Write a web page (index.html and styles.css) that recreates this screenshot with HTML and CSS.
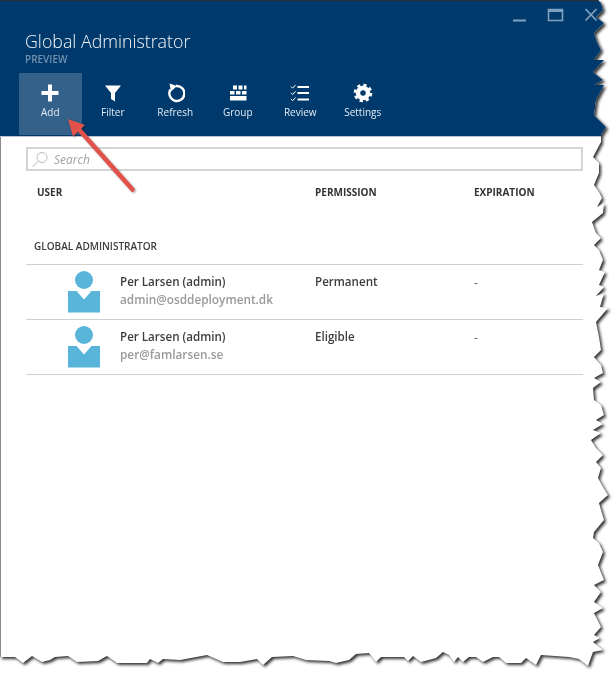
FILE: index.html
```html
<!DOCTYPE html>
<html lang="en">
<head>
<meta charset="utf-8">
<title>Global Administrator</title>
<link rel="stylesheet" href="styles.css">
</head>
<body>
<div class="torn">
<div class="sheet">
  <header class="blade">
    <div class="controls">
      <svg class="ctl" width="90" height="16" viewBox="0 0 90 16"><path d="M0 13.500h13" class="ctl-s" stroke-width="2"/><path d="M35.500 2.500h14v11h-14z" class="ctl-s" stroke-width="1.600"/><path d="M35 3.500h15" class="ctl-s" stroke-width="3"/><path d="M72.500 2l11 11.500M83.500 2l-11 11.500" class="ctl-s" stroke-width="1.800"/></svg>
    </div>
    <h1 class="title">Global Administrator</h1>
    <div class="subtitle">PREVIEW</div>
    <nav class="toolbar">
      <div class="tool active">
        <svg class="icon" width="20" height="20" viewBox="0 0 20 20"><path d="M8 1.500h4V8h6.500v4H12v6.500H8V12H1.500V8H8z" fill="#fff"/></svg>
        <span>Add</span>
      </div>
      <div class="tool">
        <svg class="icon" width="20" height="20" viewBox="0 0 20 20"><path d="M2 2.500h16l-6 7.500v8.500l-4-2.500v-6z" fill="#fff"/></svg>
        <span>Filter</span>
      </div>
      <div class="tool">
        <svg class="icon" width="20" height="20" viewBox="0 0 20 20"><path d="M5.500 6.500A7.500 7.500 0 1 0 11 3" fill="none" stroke="#fff" stroke-width="2.400"/><path d="M4.500 .5l7.500 2.500L6 8.500z" fill="#fff"/></svg>
        <span>Refresh</span>
      </div>
      <div class="tool">
        <svg class="icon" width="20" height="20" viewBox="0 0 20 20"><path d="M5 2.500h4v4H5zM10.500 2.500h4v4h-4zM16 2.500h2.500v4H16zM2 8h4.500v3.500H2zM8 8h4.500v3.500H8zM14 8h4.500v3.500H14zM2 13h16.500v4.500H2z" fill="#fff"/></svg>
        <span>Group</span>
      </div>
      <div class="tool">
        <svg class="icon" width="20" height="20" viewBox="0 0 20 20"><path d="M1 3.500l1.700 1.700L5.500 2M1 9.800l1.700 1.700 2.800-3.200M1 16l1.700 1.700 2.800-3.200" fill="none" stroke="#fff" stroke-width="1"/><path d="M7.500 4h11.500M7.500 10h11.500M7.500 16.500h11.500" stroke="#fff" stroke-width="1.800"/></svg>
        <span>Review</span>
      </div>
      <div class="tool">
        <svg class="icon" width="20" height="20" viewBox="0 0 20 20"><circle cx="10" cy="10" r="5" fill="none" stroke="#fff" stroke-width="4.500"/><circle cx="10" cy="10" r="8" fill="none" stroke="#fff" stroke-width="2.600" stroke-dasharray="3.300 3"/></svg>
        <span>Settings</span>
      </div>
    </nav>
  </header>
  <main class="content">
    <div class="search">
      <svg width="20" height="17" viewBox="0 0 20 17"><circle cx="12" cy="6.500" r="5" fill="none" stroke="#bbb"/><path d="M8.500 10L2.500 15.500" stroke="#bbb"/></svg>
      <span>Search</span>
    </div>
    <div class="row head">
      <div class="c-user">USER</div>
      <div>PERMISSION</div>
      <div>EXPIRATION</div>
    </div>
    <div class="section">GLOBAL ADMINISTRATOR</div>
    <div class="row entry">
      <div class="c-user person">
        <svg class="avatar" width="32" height="42" viewBox="0 0 32 42"><circle cx="16" cy="9" r="9" fill="#59b4d9"/><path d="M0 20h8.500l7.500 8.500 7.500-8.500H32v21.500H0z" fill="#59b4d9"/></svg>
        <div>
          <div class="name">Per Larsen (admin)</div>
          <div class="mail">admin@osddeployment.dk</div>
        </div>
      </div>
      <div class="perm">Permanent</div>
      <div class="exp">-</div>
    </div>
    <div class="row entry">
      <div class="c-user person">
        <svg class="avatar" width="32" height="42" viewBox="0 0 32 42"><circle cx="16" cy="9" r="9" fill="#59b4d9"/><path d="M0 20h8.500l7.500 8.500 7.500-8.500H32v21.500H0z" fill="#59b4d9"/></svg>
        <div>
          <div class="name">Per Larsen (admin)</div>
          <div class="mail">per@famlarsen.se</div>
        </div>
      </div>
      <div class="perm">Eligible</div>
      <div class="exp">-</div>
    </div>
  </main>
</div>
</div>
<svg class="arrow" width="90" height="90" viewBox="60 110 90 90"><path d="M132.500 189.500L78.500 129" stroke="#e2524b" stroke-width="4.500" stroke-linecap="round"/><path d="M68 119L85 125 73 136.500z" fill="#e2524b"/></svg>
</body>
</html>
```
FILE: styles.css
```css
html, body {
  margin: 0;
  padding: 0;
  background: #fff;
}
body {
  width: 616px;
  height: 677px;
  overflow: hidden;
  position: relative;
  font-family: "Open Sans", "Noto Sans", sans-serif;
}
.torn {
  width: 616px;
  height: 677px;
  filter: drop-shadow(2px 2.500px 1.400px #333);
}
.sheet {
  width: 616px;
  height: 677px;
  box-sizing: border-box;
  background: #fff;
  border-left: 1px solid #8c8c8c;
  clip-path: polygon(0 0, 598px 0, 601px 3px, 603px 10px, 596px 17px, 604px 23px, 594px 33px, 597px 42px, 601px 50px, 594px 60px, 604px 60px, 593px 72px, 603px 80px, 594px 85px, 604px 85px, 596px 100px, 594px 115px, 606px 127px, 601px 135px, 601px 142px, 593px 157px, 599px 163px, 599px 173px, 594px 185px, 599px 192px, 602px 198px, 597px 207px, 604px 203px, 603px 213px, 592px 222px, 596px 233px, 601px 238px, 594px 245px, 599px 250px, 603px 260px, 599px 270px, 605px 272px, 599px 285px, 604px 287px, 596px 296px, 604px 293px, 600px 307px, 608px 308px, 596px 322px, 599px 337px, 601px 350px, 594px 357px, 601px 365px, 603px 373px, 594px 378px, 601px 382px, 593px 388px, 594px 400px, 601px 405px, 604px 415px, 596px 420px, 603px 424px, 593px 430px, 601px 433px, 591px 440px, 596px 448px, 603px 455px, 596px 462px, 601px 468px, 598px 478px, 603px 487px, 608px 495px, 599px 503px, 601px 510px, 604px 520px, 594px 532px, 593px 538px, 599px 543px, 603px 552px, 598px 565px, 604px 580px, 594px 585px, 601px 592px, 594px 602px, 603px 608px, 594px 613px, 601px 627px, 594px 635px, 600px 638px, 593px 642px, 603px 650px, 593px 652px, 588px 666px, 579px 659px, 569px 657px, 541px 655px, 536px 665px, 526px 658px, 521px 663px, 506px 663px, 499px 657px, 493px 657px, 483px 662px, 476px 657px, 469px 657px, 463px 662px, 458px 657px, 454px 662px, 449px 655px, 443px 652px, 436px 658px, 421px 662px, 413px 656px, 408px 661px, 404px 657px, 381px 657px, 376px 662px, 369px 653px, 356px 654px, 349px 660px, 336px 663px, 329px 661px, 306px 660px, 293px 656px, 272px 657px, 263px 665px, 257px 659px, 240px 662px, 223px 662px, 207px 655px, 180px 660px, 163px 659px, 158px 663px, 150px 659px, 147px 663px, 128px 663px, 117px 663px, 107px 656px, 98px 661px, 77px 662px, 68px 656px, 55px 657px, 50px 660px, 42px 662px, 32px 656px, 23px 663px, 15px 657px, 0 657px);
}
.blade {
  height: 137px;
  box-sizing: border-box;
  background: #003a6c;
  border-top: 1px solid #2a2f36;
  border-bottom: 1px solid #b9c6d2;
  margin-left: -1px;
  padding-left: 25px;
  position: relative;
}
.controls {
  display: flex;
  justify-content: flex-end;
  height: 22px;
  padding: 6px 13px 0 0;
  box-sizing: border-box;
}
.ctl-s {
  fill: none;
  stroke: #7fa0bf;
}
.title {
  margin: 6px 0 0;
  font-size: 17.800px;
  line-height: 24px;
  font-weight: 300;
  color: #f4f7fa;
}
.subtitle {
  font-size: 10px;
  line-height: 12px;
  font-weight: 600;
  color: #6f92b2;
}
.toolbar {
  display: flex;
  margin: 8px 0 0 -6px;
}
.tool {
  width: 62.500px;
  height: 62px;
  box-sizing: border-box;
  padding-top: 10px;
  display: flex;
  flex-direction: column;
  align-items: center;
  font-size: 10px;
  line-height: 13px;
  color: #e3ebf2;
}
.tool.active {
  background: #33618a;
}
.tool span {
  margin-top: 3px;
}
.content {
  width: 557px;
  margin-left: 25px;
}
.search {
  height: 24px;
  margin-top: 10px;
  box-sizing: border-box;
  border: 2px solid #d4d4d4;
  display: flex;
  align-items: center;
  gap: 4px;
  padding-left: 2px;
  font-size: 12px;
  font-style: italic;
  color: #a2a2a2;
}
.row {
  display: grid;
  grid-template-columns: 289px 159px 1fr;
}
.head {
  margin-top: 15px;
  font-size: 10px;
  line-height: 13px;
  font-weight: 700;
  color: #333;
}
.head .c-user {
  padding-left: 11px;
}
.section {
  margin-top: 41px;
  padding: 0 0 11px 8px;
  font-size: 10px;
  line-height: 13px;
  font-weight: 600;
  color: #3c3c3c;
  border-bottom: 1px solid #d0d0d0;
}
.entry {
  height: 55px;
  box-sizing: border-box;
  border-bottom: 1px solid #d0d0d0;
  font-size: 11.600px;
  line-height: 17px;
  font-weight: 600;
  color: #3d3d3d;
}
.person {
  display: flex;
  gap: 20px;
  padding: 6px 0 0 42px;
}
.name {
  margin-top: 2px;
}
.mail {
  color: #9a9a9a;
  font-size: 11.800px;
  margin-top: 1px;
}
.perm, .exp {
  padding-top: 8px;
}
.exp {
  font-weight: 400;
}
.arrow {
  position: absolute;
  left: 60px;
  top: 110px;
  filter: drop-shadow(1px 1px 1px rgba(0, 0, 0, .35));
}
```
